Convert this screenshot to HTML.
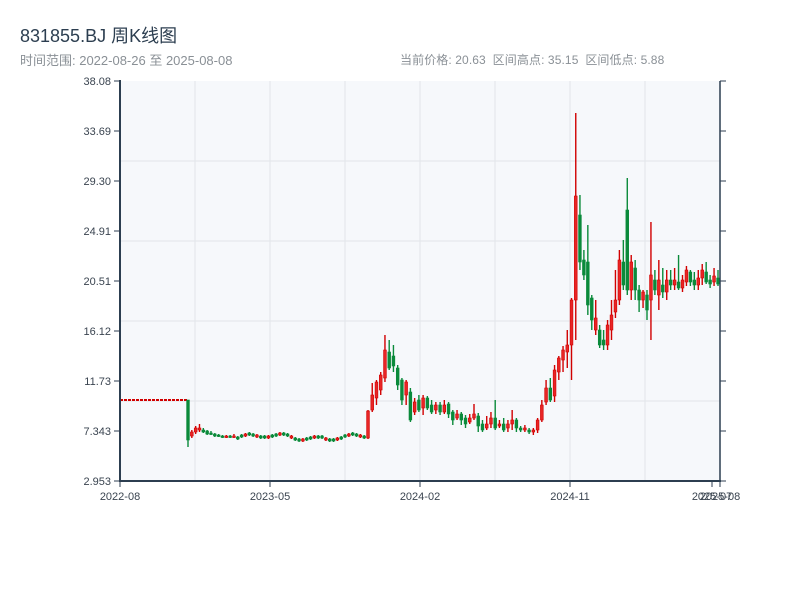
<!DOCTYPE html>
<html><head><meta charset="utf-8"><style>
body{margin:0;background:#fff;width:800px;height:600px;overflow:hidden;font-family:"Liberation Sans","Noto Sans CJK SC",sans-serif}
.t{position:absolute;left:20px;top:22px;font-size:18px;color:#2c3e50}
.s{position:absolute;top:51px;font-size:12px;color:#8a9096}
</style></head><body>
<div class="t">831855.BJ 周K线图</div>
<div class="s" style="left:20px;font-size:13px;top:50px">时间范围: 2022-08-26 至 2025-08-08</div>
<div class="s" style="left:400px;letter-spacing:0.1px">当前价格: 20.63&nbsp;&nbsp;区间高点: 35.15&nbsp;&nbsp;区间低点: 5.88</div>
<svg id="c" width="800" height="600" style="position:absolute;left:0;top:0" font-family="Liberation Sans, sans-serif" font-size="11" fill="#444"></svg>
<script>
var s='';
s+='<rect x="120" y="81" width="600" height="400" fill="#f6f8fb"/>';
for(var i=1;i<8;i++){var x=120+i*75;s+='<line x1="'+x+'" y1="81" x2="'+x+'" y2="481" stroke="#e2e5ea"/>';}
for(var i=1;i<5;i++){var y=81+i*80;s+='<line x1="120" y1="'+y+'" x2="720" y2="'+y+'" stroke="#e2e5ea"/>';}
var lab=['38.08','33.69','29.30','24.91','20.51','16.12','11.73','7.343','2.953'];
for(var i=0;i<9;i++){var y=81+i*50;s+='<line x1="114" y1="'+y+'" x2="120" y2="'+y+'" stroke="#2c3e50"/><line x1="720" y1="'+y+'" x2="726" y2="'+y+'" stroke="#2c3e50"/><text x="111" y="'+(y+4)+'" text-anchor="end" fill="#3a4450">'+lab[i]+'</text>';}
var xl=[[120,'2022-08'],[270,'2023-05'],[420,'2024-02'],[570,'2024-11'],[712,'2025-07'],[720,'2025-08']];
xl.forEach(function(a){s+='<line x1="'+a[0]+'" y1="481" x2="'+a[0]+'" y2="487" stroke="#2c3e50"/><text x="'+a[0]+'" y="500" text-anchor="middle" fill="#3a4450">'+a[1]+'</text>';});
s+='<line x1="120" y1="400" x2="187" y2="400" stroke="#d10000" stroke-width="2" stroke-dasharray="3,1"/>';
var d=[[400,440,400,447],[436,432,438,430],[432,428,434,426],[430,428,432,424],[430,432,433,428],[431,434,435,430],[433,434,435,431],[434,436,437,433],[435,436,437,434],[436,437,438,435],[437,436,438,435],[436,437,438,435],[437,436,438,434]];
for(var i=13;i<47;i++){var b=437+Math.round(2*Math.sin(i*0.7)+1.5*Math.sin(i*0.23));var up=i%3==0;d.push(up?[b+1,b-1,b-2,b+2]:[b-1,b+1,b-2,b+2]);}
d=d.concat([[438,411,410,439],[410,395,383,412],[398,382,380,405],[390,375,372,395],[378,350,335,382],[352,368,340,370],[356,366,345,372],[368,385,365,390],[380,400,378,405],[395,382,380,405],[392,420,388,422],[412,402,398,415],[400,410,395,412],[408,398,395,415],[398,408,396,410],[405,412,400,414],[410,405,402,414],[405,412,402,415],[412,405,400,414],[404,414,402,418],[412,420,410,425],[418,414,410,420],[414,420,412,425],[418,424,415,428],[422,418,414,424],[418,414,404,420],[416,426,413,432],[424,430,420,432],[428,424,416,430],[424,418,412,428],[418,428,400,430],[426,424,420,428],[424,430,418,432],[428,424,420,432],[424,420,410,430],[420,428,418,432],[428,430,426,432],[430,428,425,432],[430,432,428,434],[432,430,428,435],[430,420,418,433],[420,405,400,422],[402,388,380,405],[388,400,378,402],[396,370,365,402],[372,358,356,380],[360,350,346,372],[352,345,330,368],[345,300,298,380],[300,196,113,340],
[215,262,195,270],[260,275,250,280],[262,305,225,315],[298,320,295,330],[330,318,300,335],[330,345,325,348],[340,345,330,350],[345,325,320,350],[330,315,300,340],[312,300,270,318],[300,260,250,305],[262,285,240,290],[210,290,178,295],[290,262,255,300],[268,290,260,300],[290,300,285,312],[300,292,290,308],[295,310,290,320],[300,275,222,340],[280,290,270,295],[295,280,260,310],[285,292,268,298],[292,280,270,300],[280,285,270,290],[285,280,268,290],[282,288,255,290],[288,280,275,292],[282,270,266,286],[272,282,270,286],[280,285,272,290],[285,278,270,290],[278,270,264,285],[272,282,262,284],[280,284,275,288],[282,276,268,286],[278,284,270,286]]);
function X(i){if(i<=47)return 188+i*3.83;if(i<=96)return 368+(i-47)*4.24;return 576+(i-96)*(142/(d.length-1-96));}
d.forEach(function(c,i){var x=X(i),o=c[0],cl=c[1],top=Math.min(o,cl),h=Math.max(1.5,Math.abs(o-cl));var red=cl<o;var col=red?'#d10000':'#0a8a3a';
s+='<line x1="'+x+'" y1="'+c[2]+'" x2="'+x+'" y2="'+c[3]+'" stroke="'+col+'" stroke-width="1.4"/>';
s+='<rect x="'+(x-1.4)+'" y="'+top+'" width="2.8" height="'+h+'" fill="'+(red?'#e82525':col)+'" stroke="'+col+'" stroke-width="0.6"/>';});
s+='<line x1="120" y1="80" x2="120" y2="482" stroke="#2c3e50" stroke-width="2"/><line x1="119" y1="481" x2="721" y2="481" stroke="#2c3e50" stroke-width="2"/><line x1="720" y1="81" x2="720" y2="481" stroke="#2c3e50" stroke-width="1.5"/>';
document.getElementById('c').innerHTML=s;
</script>
</body></html>
